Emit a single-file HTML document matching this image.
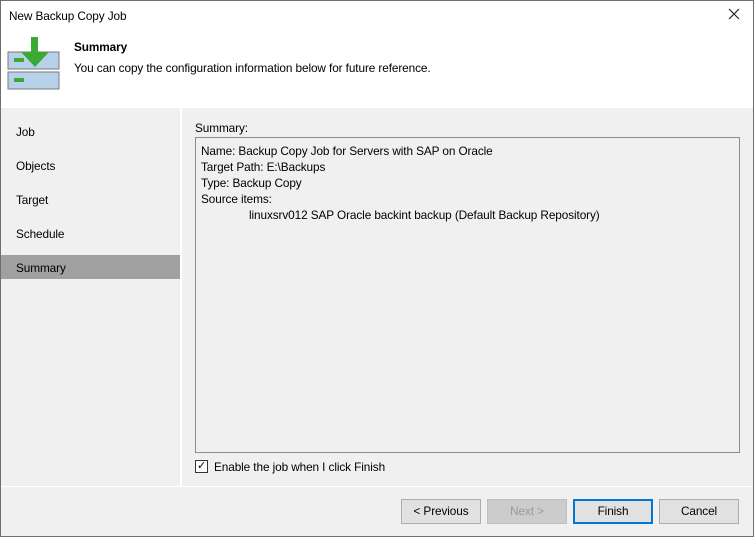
<!DOCTYPE html>
<html><head><style>
body{margin:0;width:754px;height:537px;overflow:hidden;font-family:"Liberation Sans",sans-serif;font-size:11.8px;letter-spacing:-0.1px;color:#000;}
.win{position:absolute;left:0;top:0;width:752px;height:535px;border:1px solid #6e6e6e;background:#f0f0f0;}
.abs{position:absolute;}
.btn{position:absolute;top:498px;width:78px;height:23px;border:1px solid #adadad;background:#e1e1e1;text-align:center;line-height:23px;}
</style></head><body>
<div class="win">
<div class="abs" style="left:0;top:0;width:752px;height:107px;background:#fff;"></div>
<div class="abs" style="left:8px;top:8px;">New Backup Copy Job</div>
<svg class="abs" style="left:727px;top:7px" width="12" height="12"><path d="M1 1L11 11M11 1L1 11" stroke="#222" stroke-width="1.2"/></svg>
<svg class="abs" style="left:6px;top:36px" width="54" height="54">
<rect x="1" y="15" width="51" height="17" fill="#b8d1ea" stroke="#7a7a7a"/>
<rect x="1" y="35" width="51" height="17" fill="#b8d1ea" stroke="#7a7a7a"/>
<rect x="7" y="21" width="10" height="4" fill="#3aaa35"/>
<rect x="7" y="41" width="10" height="4" fill="#3aaa35"/>
<path d="M24 0h7v15h11l-14 15-14-15h10z" fill="#3aaa35"/>
</svg>
<div class="abs" style="left:73px;top:39px;font-weight:bold;">Summary</div>
<div class="abs" style="left:73px;top:60px;">You can copy the configuration information below for future reference.</div>
<div class="abs" style="left:179px;top:107px;width:2px;height:379px;background:#fff;"></div>
<div class="abs" style="left:15px;top:124px;">Job</div>
<div class="abs" style="left:15px;top:158px;">Objects</div>
<div class="abs" style="left:15px;top:192px;">Target</div>
<div class="abs" style="left:15px;top:226px;">Schedule</div>
<div class="abs" style="left:0;top:254px;width:179px;height:24px;background:#a0a0a0;"></div>
<div class="abs" style="left:15px;top:260px;">Summary</div>
<div class="abs" style="left:194px;top:120px;">Summary:</div>
<div class="abs" style="left:194px;top:136px;width:543px;height:314px;border:1px solid #8c8c8c;background:#f0f0f0;line-height:16px;">
<div style="padding:5px 0 0 5px;">Name: Backup Copy Job for Servers with SAP on Oracle<br>Target Path: E:\Backups<br>Type: Backup Copy<br>Source items:<br><span style="padding-left:48px">linuxsrv012 SAP Oracle backint backup (Default Backup Repository)</span></div></div>
<div class="abs" style="left:194px;top:459px;width:11px;height:11px;border:1px solid #333;background:#fff;font-size:11px;line-height:11px;text-align:center;">✓</div>
<div class="abs" style="left:213px;top:459px;">Enable the job when I click Finish</div>
<div class="abs" style="left:0;top:485px;width:752px;height:1px;background:#fff;"></div>
<div class="btn" style="left:400px;">&lt; Previous</div>
<div class="btn" style="left:486px;background:#ccc;border-color:#bfbfbf;color:#999;">Next &gt;</div>
<div class="btn" style="left:572px;border:2px solid #0078d7;width:76px;height:21px;line-height:21px;">Finish</div>
<div class="btn" style="left:658px;">Cancel</div>
</div>
</body></html>
